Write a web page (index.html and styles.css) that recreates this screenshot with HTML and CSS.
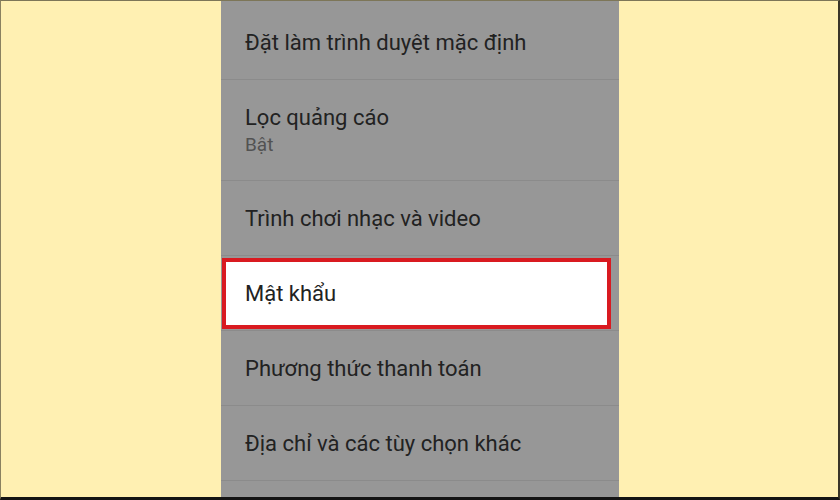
FILE: index.html
```html
<!DOCTYPE html>
<html lang="vi">
<head>
<meta charset="utf-8">
<title>Cài đặt</title>
<link rel="stylesheet" href="styles.css">
</head>
<body>
<div class="frame">
  <div class="panel">
    <div class="row row-first"><span class="title">Đặt làm trình duyệt mặc định</span></div>
    <div class="row row-double">
      <span class="title">Lọc quảng cáo</span>
      <span class="sub">Bật</span>
    </div>
    <div class="row"><span class="title">Trình chơi nhạc và video</span></div>
    <div class="row row-hl">
      <div class="highlight"><span class="title">Mật khẩu</span></div>
    </div>
    <div class="row"><span class="title">Phương thức thanh toán</span></div>
    <div class="row"><span class="title">Địa chỉ và các tùy chọn khác</span></div>
    <div class="row row-last"></div>
  </div>
</div>
</body>
</html>
```
FILE: styles.css
```css
* { box-sizing: border-box; }
html, body { margin: 0; padding: 0; }
body {
  width: 840px;
  height: 500px;
  overflow: hidden;
  font-family: Roboto, "Noto Sans", sans-serif;
}
.frame {
  width: 840px;
  height: 500px;
  background: #fff0b2;
  border-top: 1px solid #7d7658;
  border-left: 1px solid #8a8160;
  border-right: 2px solid #3a3528;
  border-bottom: 3px solid #141414;
  display: flex;
  padding-left: 220px;
}
.panel {
  width: 398px;
  height: 100%;
  background: #979797;
  display: flex;
  flex-direction: column;
}
.row {
  height: 75px;
  flex: none;
  border-bottom: 1px solid #8b8b8b;
  display: flex;
  flex-direction: column;
  justify-content: center;
  padding-left: 24px;
  padding-top: 2px;
}
.row-first {
  height: 79px;
  padding-top: 6px;
}
.row-double {
  height: 101px;
  justify-content: flex-start;
  padding-top: 25px;
}
.row-last {
  flex: 1;
  border-bottom: none;
}
.title {
  font-size: 22px;
  line-height: 26px;
  color: #222222;
}
.sub {
  font-size: 19px;
  line-height: 22px;
  margin-top: 3px;
  color: #525252;
}
.row-hl {
  padding: 2px 8px 1px 1px;
}
.highlight {
  flex: 1;
  background: #ffffff;
  border: 4px solid #d91a20;
  display: flex;
  align-items: center;
  padding-left: 19px;
}
```
